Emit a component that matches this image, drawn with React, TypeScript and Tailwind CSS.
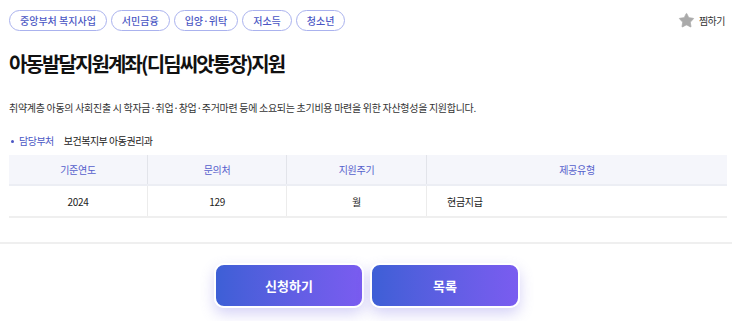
import { Star } from 'lucide-react'

const tags = ['중앙부처 복지사업', '서민금융', '입양·위탁', '저소득', '청소년']

const headers = ['기준연도', '문의처', '지원주기', '제공유형']

export default function App() {
  return (
    <div className="w-[732px] h-[321px] bg-white overflow-hidden font-['Noto_Sans_CJK_KR','Noto_Sans',sans-serif] text-[#222]">
      <div className="px-[9px] pt-[10px]">
        {/* Tags + bookmark */}
        <div className="flex items-center justify-between">
          <div className="flex gap-[4px]">
            {tags.map(t => (
              <span
                key={t}
                className="h-[21px] px-[10px] flex items-center rounded-full border border-[#aab2ee] text-[10px] font-medium text-[#4b57c4] leading-none"
              >
                {t}
              </span>
            ))}
          </div>
          <div className="flex items-center gap-[4px] mr-[-2px]">
            <Star className="w-[17px] h-[17px] text-[#aaaaaa]" fill="#aaaaaa" strokeWidth={1} />
            <span className="text-[10px] tracking-[-0.5px] text-[#333]">찜하기</span>
          </div>
        </div>

        {/* Title */}
        <h1 className="mt-[18px] text-[20px] font-bold leading-[30px] text-[#111] tracking-[-1.9px]">
          아동발달지원계좌(디딤씨앗통장)지원
        </h1>

        {/* Description */}
        <p className="mt-[21px] text-[10px] leading-[16px] tracking-[-0.3px] text-[#333]">
          취약계층 아동의 사회진출 시 학자금·취업·창업·주거마련 등에 소요되는 초기비용 마련을 위한 자산형성을 지원합니다.
        </p>

        {/* Department */}
        <div className="mt-[17px] flex items-center text-[10px] tracking-[-0.5px] leading-[16px]">
          <span className="w-[3px] h-[3px] rounded-full bg-[#4b57c4] ml-[2px] mr-[5px]" />
          <span className="text-[#4b57c4]">담당부처</span>
          <span className="ml-[10px] text-[#222]">보건복지부 아동권리과</span>
        </div>

        {/* Table */}
        <div className="mt-[6px] w-[718px] text-[10px] tracking-[-0.3px]">
          <div className="grid grid-cols-[139px_139px_140px_1fr] h-[31px] bg-[#f5f6fb] border-b-2 border-[#eceef4] text-[#5560cc]">
            {headers.map((h, i) => (
              <div
                key={h}
                className={`flex items-center justify-center ${i < 3 ? 'border-r border-[#e2e4ea]' : ''}`}
              >
                {h}
              </div>
            ))}
          </div>
          <div className="grid grid-cols-[139px_139px_140px_1fr] h-[32px] border-b-2 border-[#efefef] text-[#222]">
            <div className="flex items-center justify-center border-r border-[#ececec]">2024</div>
            <div className="flex items-center justify-center border-r border-[#ececec]">129</div>
            <div className="flex items-center justify-center border-r border-[#ececec]">월</div>
            <div className="flex items-center pl-[20px]">현금지급</div>
          </div>
        </div>
      </div>

      {/* Divider */}
      <div className="mt-[24px] h-[2px] bg-[#efefef]" />

      {/* Buttons */}
      <div className="mt-[19px] flex justify-center gap-[6px] pl-[2px]">
        <button className="w-[150px] h-[45px] rounded-[10px] border-2 border-white bg-gradient-to-r from-[#3d5fd6] to-[#7a5cf0] text-white text-[13px] font-bold shadow-[0_6px_14px_rgba(120,110,230,0.3)]">
          신청하기
        </button>
        <button className="w-[150px] h-[45px] rounded-[10px] border-2 border-white bg-gradient-to-r from-[#3d5fd6] to-[#7a5cf0] text-white text-[13px] font-bold shadow-[0_6px_14px_rgba(120,110,230,0.3)]">
          목록
        </button>
      </div>
    </div>
  )
}
